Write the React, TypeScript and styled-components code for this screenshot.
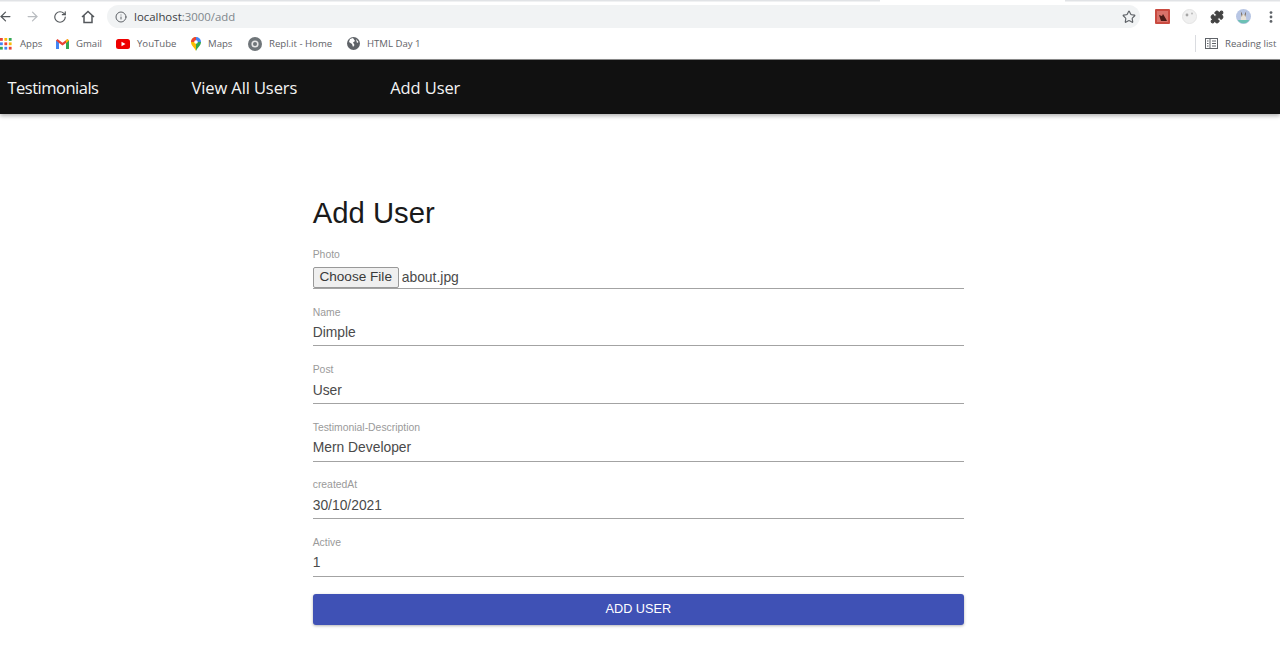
import React from "react";
import styled, { createGlobalStyle } from "styled-components";
import { ArrowLeft, ArrowRight, RotateCw, Info, Star, Puzzle } from "lucide-react";

const GlobalStyle = createGlobalStyle`
  html, body {
    margin: 0;
    padding: 0;
    background: #fff;
    height: 100%;
    overflow: hidden;
  }
  * { box-sizing: border-box; }
`;

const TabStrip = styled.div`
  height: 4px;
  background: linear-gradient(to right, #e1e3e6 0, #e1e3e6 880px, #fff 880px, #fff 1065px, #e1e3e6 1065px) no-repeat;
  background-size: 100% 1.5px;
`;

const Toolbar = styled.div`
  height: 25px;
  display: flex;
  align-items: center;
  background: #fff;
`;

const NavIcons = styled.div`
  width: 107px;
  flex: none;
  display: flex;
  align-items: center;
  gap: 12.5px;
  margin-left: -2.5px;
`;

const IconSlot = styled.span<{ $faded?: boolean }>`
  display: flex;
  width: 15px;
  justify-content: center;
  color: ${(p) => (p.$faded ? "#b9bcc0" : "#54585c")};
`;

const AddressBar = styled.div`
  width: 1033px;
  flex: none;
  height: 23px;
  border-radius: 12px;
  background: #f1f3f4;
  display: flex;
  align-items: center;
  padding: 0 4px 0 8px;
  gap: 7px;
  font: 11.4px "Open Sans", sans-serif;
  color: #202124;
  margin-left: 2.5px;
`;

const Url = styled.span`
  flex: 1;
  color: #3c4043;
  & > span { color: #80868b; }
`;

const Extensions = styled.div`
  flex: 1;
  display: flex;
  align-items: center;
  padding-left: 15px;
  gap: 12px;
`;

const ExtensionSlot = styled.span`
  width: 15px;
  flex: none;
  display: flex;
  justify-content: center;
`;

const Bookmarks = styled.div`
  height: 31px;
  display: flex;
  align-items: center;
  justify-content: space-between;
  background: #fff;
  padding-bottom: 1px;
  border-bottom: 1px solid #8d8d8d;
`;

const BookmarkList = styled.div`
  display: flex;
  align-items: center;
`;

const Bookmark = styled.div<{ $width: number }>`
  width: ${(p) => p.$width}px;
  display: flex;
  align-items: center;
  gap: 7px;
  font: 9.6px "Open Sans", sans-serif;
  color: #5f6368;
  white-space: nowrap;
`;

const ReadingList = styled.div`
  display: flex;
  align-items: center;
  gap: 7px;
  width: 85px;
  height: 17px;
  padding-left: 9px;
  border-left: 1px solid #dadce0;
  font: 9.6px "Open Sans", sans-serif;
  color: #5f6368;
  white-space: nowrap;
`;

const NavBar = styled.nav`
  height: 54px;
  background: #111;
  display: flex;
  align-items: center;
  padding-left: 7.5px;
  gap: 93px;
  box-shadow: 0 2px 4px rgba(0, 0, 0, 0.3);
`;

const NavLink = styled.a<{ $tight?: boolean }>`
  font: 400 16.5px "Open Sans", sans-serif;
  color: #f4f4f4;
  letter-spacing: ${(p) => (p.$tight ? "-0.5px" : "-0.1px")};
`;

const Main = styled.main`
  padding: 81px 0 0 312.7px;
`;

const Form = styled.form`
  width: 651.3px;
  display: flex;
  flex-direction: column;
  font-family: "Liberation Sans", Arial, sans-serif;
`;

const Heading = styled.h1`
  margin: 0 0 18.4px;
  height: 35px;
  font: 400 29.3px/35px "Liberation Sans", Arial, sans-serif;
  color: #1a1a1a;
`;

const Field = styled.div`
  height: 40.5px;
  margin-bottom: 17.1px;
  border-bottom: 1px solid #a3a3a3;
  display: flex;
  flex-direction: column;
`;

const Label = styled.label`
  font-size: 10.4px;
  line-height: 12px;
  color: #9a9a9a;
  margin-top: 0.6px;
  margin-bottom: 1.4px;
`;

const Value = styled.div`
  font-size: 13.85px;
  line-height: 24px;
  color: #4a4a4a;
`;

const FileRow = styled.div`
  display: flex;
  align-items: center;
  gap: 3px;
  margin-top: 5px;
  font-size: 13.9px;
  color: #4a4a4a;
`;

const FileName = styled.span`
  margin-bottom: 2px;
`;

const ChooseButton = styled.span`
  width: 86px;
  height: 21px;
  background: #efefef;
  border: 1px solid #999;
  border-radius: 2px;
  font-size: 13.6px;
  line-height: 18px;
  text-align: center;
  color: #3a3a3a;
`;

const Submit = styled.button`
  width: 100%;
  height: 31px;
  margin-top: 0;
  background: #3f51b5;
  border: none;
  border-radius: 3px;
  color: #fff;
  font: 12.7px "Liberation Sans", Arial, sans-serif;
  box-shadow: 0 1px 3px rgba(0, 0, 0, 0.3);
`;

const HomeIcon = () => (
  <svg width="14" height="14" viewBox="0 0 14 14" fill="none" stroke="currentColor" strokeWidth="1.5">
    <path d="M1 7 L7 1.5 L13 7 M3 5.5 V12.5 H11 V5.5" />
  </svg>
);

const ReadingIcon = () => (
  <svg width="13" height="13" viewBox="0 0 13 13" fill="none" stroke="#5f6368" strokeWidth="1">
    <rect x="0.5" y="1.5" width="12" height="10" />
    <path d="M5 1.5 V11.5 M7 4 H11 M7 6.5 H11 M7 9 H11 M2 4 H3.5 M2 6.5 H3.5 M2 9 H3.5" />
  </svg>
);

const AppsGrid = () => (
  <svg width="13" height="12" viewBox="0 0 13 12">
    {[0, 1, 2].map((r) =>
      [0, 1, 2].map((c) => (
        <rect
          key={`${r}${c}`}
          x={c * 4.4}
          y={r * 4.4}
          width="2.8"
          height="2.8"
          fill={[["#ea4335", "#fbbc04", "#34a853"], ["#4285f4", "#ea4335", "#fbbc04"], ["#34a853", "#4285f4", "#ea4335"]][r][c]}
        />
      ))
    )}
  </svg>
);

const GmailIcon = () => (
  <svg width="13" height="10" viewBox="0 0 13 10">
    <path d="M0 1.5 V10 H3 V4 L6.5 6.5 L10 4 V10 H13 V1.5 L11.5 0 L6.5 3.8 L1.5 0 Z" fill="#ea4335" />
    <path d="M0 1.5 V10 H3 V4 Z" fill="#4285f4" />
    <path d="M13 1.5 V10 H10 V4 Z" fill="#34a853" />
    <path d="M13 1.5 L11.5 0 L10 1.2 V4 Z" fill="#fbbc04" />
  </svg>
);

const YoutubeIcon = () => (
  <svg width="14" height="10" viewBox="0 0 14 10">
    <rect width="14" height="10" rx="2.5" fill="#e00" />
    <path d="M5.5 2.8 L9.5 5 L5.5 7.2 Z" fill="#fff" />
  </svg>
);

const MapsIcon = () => (
  <svg width="10" height="14" viewBox="0 0 10 14">
    <path d="M5 14 C3.5 10.5 0 8.5 0 5 A5 5 0 0 1 5 0 Z" fill="#fbbc04" />
    <path d="M5 14 C6.5 10.5 10 8.5 10 5 L5 5 Z" fill="#34a853" />
    <path d="M5 0 A5 5 0 0 1 10 5 L5 5 Z" fill="#4285f4" />
    <path d="M0 5 A5 5 0 0 1 5 0 L5 5 Z" fill="#ea4335" />
    <circle cx="5" cy="5" r="1.8" fill="#fff" />
  </svg>
);

const ReplIcon = () => (
  <svg width="14" height="14" viewBox="0 0 14 14">
    <circle cx="7" cy="7" r="7" fill="#6f7579" />
    <circle cx="7" cy="7" r="3.6" fill="#e6e6e6" />
    <circle cx="7" cy="7" r="2" fill="#6f7579" />
  </svg>
);

const GlobeIcon = () => (
  <svg width="13" height="13" viewBox="0 0 13 13">
    <circle cx="6.5" cy="6.5" r="6.5" fill="#5f6368" />
    <path d="M6 1 L3 2 L2 5 L5 7 L6 10 L7.5 8 L6 5.5 L8 4 Z M9 2 L11.5 5 L10 6 Z" fill="#fff" />
  </svg>
);

const ExtensionBadge = () => (
  <svg width="15" height="15" viewBox="0 0 15 15">
    <rect width="15" height="15" rx="1" fill="#c94a40" />
    <rect x="2" y="2" width="11" height="11" fill="#d9726a" />
    <path d="M4 6 L7 7 L8 5 L11 10 L12 12 L6 12 Z" fill="#4a1a16" />
  </svg>
);

const RoundExtension = () => (
  <svg width="15" height="15" viewBox="0 0 15 15">
    <circle cx="7.5" cy="7.5" r="7" fill="#f0f0f0" stroke="#e4e4e4" />
    <circle cx="5" cy="6" r="1.4" fill="#a5a5a5" />
    <circle cx="10" cy="4.5" r="1" fill="#bbb" />
  </svg>
);

const Avatar = () => (
  <svg width="19" height="19" viewBox="0 0 19 19">
    <circle cx="9.5" cy="9.5" r="9.5" fill="#b8c6e4" />
    <path d="M2 14 H17 A9 9 0 0 1 2 14 Z" fill="#6cc0b4" />
    <path d="M6 3 L8 7 H11 L13 3 L12.5 8 L13 14 H6 L6.5 8 Z" fill="#e8e2d8" />
    <path d="M6 3 L8 7 L7.5 10 Z M13 3 L11 7 L11.5 10 Z" fill="#4a3c34" />
  </svg>
);

const DotsIcon = () => (
  <svg width="4" height="12" viewBox="0 0 4 12">
    <circle cx="2" cy="1.6" r="1.4" fill="#5f6368" />
    <circle cx="2" cy="6" r="1.4" fill="#5f6368" />
    <circle cx="2" cy="10.4" r="1.4" fill="#5f6368" />
  </svg>
);

const fields = [
  { label: "Name", value: "Dimple" },
  { label: "Post", value: "User" },
  { label: "Testimonial-Description", value: "Mern Developer" },
  { label: "createdAt", value: "30/10/2021" },
  { label: "Active", value: "1" },
];

const bookmarks = [
  { icon: <AppsGrid />, name: "Apps", width: 56 },
  { icon: <GmailIcon />, name: "Gmail", width: 60 },
  { icon: <YoutubeIcon />, name: "YouTube", width: 75 },
  { icon: <MapsIcon />, name: "Maps", width: 57 },
  { icon: <ReplIcon />, name: "Repl.it - Home", width: 99 },
  { icon: <GlobeIcon />, name: "HTML Day 1", width: 90 },
];

const App = () => {
  return (
    <>
      <GlobalStyle />
      <TabStrip />
      <Toolbar>
        <NavIcons>
          <IconSlot><ArrowLeft size={15} /></IconSlot>
          <IconSlot $faded><ArrowRight size={15} /></IconSlot>
          <IconSlot><RotateCw size={14} /></IconSlot>
          <IconSlot><HomeIcon /></IconSlot>
        </NavIcons>
        <AddressBar>
          <Info size={12} color="#5f6368" />
          <Url>localhost<span>:3000/add</span></Url>
          <Star size={14} color="#5f6368" />
        </AddressBar>
        <Extensions>
          <ExtensionSlot><ExtensionBadge /></ExtensionSlot>
          <ExtensionSlot><RoundExtension /></ExtensionSlot>
          <ExtensionSlot><Puzzle size={14} color="#444" fill="#444" /></ExtensionSlot>
          <ExtensionSlot><Avatar /></ExtensionSlot>
          <ExtensionSlot><DotsIcon /></ExtensionSlot>
        </Extensions>
      </Toolbar>
      <Bookmarks>
        <BookmarkList>
          {bookmarks.map((b) => (
            <Bookmark key={b.name} $width={b.width}>
              {b.icon}
              {b.name}
            </Bookmark>
          ))}
        </BookmarkList>
        <ReadingList>
          <ReadingIcon />
          Reading list
        </ReadingList>
      </Bookmarks>
      <NavBar>
        <NavLink $tight>Testimonials</NavLink>
        <NavLink>View All Users</NavLink>
        <NavLink>Add User</NavLink>
      </NavBar>
      <Main>
        <Form>
          <Heading>Add User</Heading>
          <Field>
            <Label>Photo</Label>
            <FileRow>
              <ChooseButton>Choose File</ChooseButton>
              <FileName>about.jpg</FileName>
            </FileRow>
          </Field>
          {fields.map((f) => (
            <Field key={f.label}>
              <Label>{f.label}</Label>
              <Value>{f.value}</Value>
            </Field>
          ))}
          <Submit type="button">ADD USER</Submit>
        </Form>
      </Main>
    </>
  );
};

export default App;
